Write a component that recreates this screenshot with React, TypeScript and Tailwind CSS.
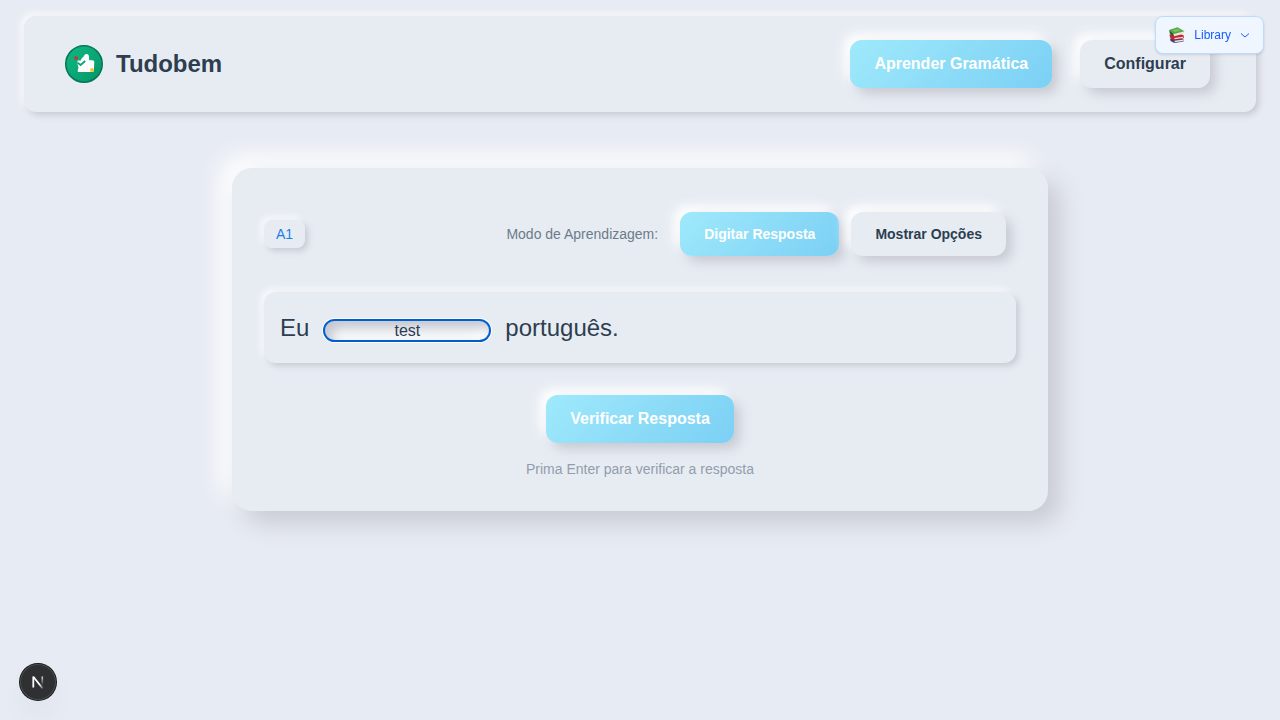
import { useState } from "react";

const raisedSm = "shadow-[3px_3px_6px_#c8cad2,-3px_-3px_6px_#fafbfc]";
const raisedMd = "shadow-[6px_6px_12px_#c8cad2,-6px_-6px_12px_#ffffff]";
const primary = "bg-linear-135 from-[#9fe9fb] to-[#7bd0f4] text-white";
const neutral = "bg-[#e7ecf3] text-[#2d3e50]";

type ButtonProps = {
  label: string;
  active?: boolean;
  small?: boolean;
  onClick?: () => void;
};

function SoftButton({ label, active, small, onClick }: ButtonProps) {
  return (
    <button
      type="button"
      onClick={onClick}
      className={`cursor-pointer rounded-xl px-6 py-3 font-semibold whitespace-nowrap ${raisedMd} ${active ? primary : neutral} ${small ? "text-sm" : "text-base"}`}
    >
      {label}
    </button>
  );
}

function Logo() {
  return (
    <svg width="40" height="40" viewBox="0 0 40 40" aria-hidden="true">
      <defs>
        <linearGradient id="logo-bg" x1="0" y1="0" x2="1" y2="1">
          <stop offset="0" stopColor="#10b981" />
          <stop offset="1" stopColor="#059669" />
        </linearGradient>
      </defs>
      <circle cx="20" cy="20" r="18.2" fill="url(#logo-bg)" stroke="#047857" strokeWidth="1.6" />
      <path
        d="M13.600 16.400L16.800 16.400C17.300 14.700 18.200 13.600 19.400 12.700C20.300 11 21 9.900 22.400 9.900C24.200 9.900 25 11.200 25 12.800L25.200 16.200L28.400 16.200C29.900 16.400 30.500 17.300 30.300 18.700L29.800 26.500C29.700 27.500 29.200 28 28.300 28L15 28C14 28 13.600 27.500 13.700 26.500L14.500 23.400L13.600 20.500Z"
        fill="white"
      />
      <path d="M13.600 18.800L16.600 21L21.200 17" stroke="#0aa874" strokeWidth="1.800" fill="none" />
      <circle cx="12" cy="14" r="2" fill="#dc2626" opacity=".8" />
      <circle cx="28" cy="26" r="2" fill="#fbbf24" opacity=".9" />
    </svg>
  );
}

function Books() {
  return (
    <svg width="18" height="18" viewBox="0 0 18 18" aria-hidden="true">
      <path d="M2 12.500L12 11L15.500 13.500L15.500 15.500L6.500 17L2.500 15Z" fill="#4b3b78" />
      <path d="M6.500 14.700L15.300 13.500L15.300 15L6.700 16.300Z" fill="#e9e3dc" />
      <path d="M1.500 8.500L12 7.500L16 9.700L15.500 12.500L6 14L2 11.500Z" fill="#c9252b" />
      <path d="M6.500 12L15 10.800L15 12L6.600 13.200Z" fill="#f3dfd8" />
      <path d="M1 4L5.600 7.500L5.500 10.500L2 8Z" fill="#25622c" />
      <path d="M5.500 7.500L16 5.500L15.500 8L6 10.300Z" fill="#e6e5dc" />
      <path d="M1 4L9.500 1.300L16.500 5.300L5.700 8Z" fill="#4fa548" />
      <path d="M4 4.200L9.500 2.500L13 4.600L6.600 6.200Z" fill="#75be65" />
    </svg>
  );
}

export default function App() {
  const [mode, setMode] = useState<"type" | "options">("type");
  const [answer, setAnswer] = useState("test");

  return (
    <div className="relative min-h-screen bg-[#e7ebf3] px-6 pt-4 font-['Liberation_Sans',Arial,sans-serif] text-[#2d3e50]">
      <header className={`flex items-center justify-between rounded-xl bg-[#e7ecf3] py-6 pr-[46px] pl-10 ${raisedSm}`}>
        <div className="flex items-center gap-3">
          <Logo />
          <h1 className="text-2xl font-bold">Tudobem</h1>
        </div>
        <nav className="flex gap-7">
          <SoftButton label="Aprender Gramática" active />
          <SoftButton label="Configurar" />
        </nav>
      </header>

      <main className="mx-auto mt-14 max-w-[816px] rounded-[20px] bg-[#e7ecf3] px-8 pt-11 pb-8 shadow-[12px_12px_24px_#c8cad2,-12px_-12px_24px_#ffffff]">
        <div className="flex items-center justify-between">
          <span className={`rounded-lg bg-[#e7ecf3] px-3 py-1 text-sm text-[#1a80e5] ${raisedSm}`}>A1</span>
          <div className="flex items-center gap-3 pr-[10px]">
            <span className="mr-[10px] text-sm text-[#6c7b8a]">Modo de Aprendizagem:</span>
            <SoftButton label="Digitar Resposta" small active={mode === "type"} onClick={() => setMode("type")} />
            <SoftButton label="Mostrar Opções" small active={mode === "options"} onClick={() => setMode("options")} />
          </div>
        </div>

        <form onSubmit={(e) => e.preventDefault()}>
          <div className={`mt-9 flex h-[71px] items-center rounded-xl bg-[#e7ecf3] px-4 text-2xl ${raisedSm}`}>
            <label htmlFor="answer">Eu</label>
            <input
              id="answer"
              value={answer}
              onChange={(e) => setAnswer(e.target.value)}
              className="mx-4 mt-[6px] h-[19px] w-[164px] rounded-[10px] bg-[#eef1f6] text-center text-base shadow-[0_0_0_3px_#ffffff,inset_6px_6px_12px_#c2c5ce,inset_-6px_-6px_12px_#ffffff] outline-2 outline-[#005fcc]"
            />
            <span>português.</span>
          </div>
          <div className="mt-8 flex flex-col items-center gap-4">
            <SoftButton label="Verificar Resposta" active />
            <p className="text-sm text-[#939dab]">Prima Enter para verificar a resposta</p>
          </div>
        </form>
      </main>

      <button
        type="button"
        className="fixed top-4 right-4 flex h-[38px] cursor-pointer items-center gap-2 rounded-lg border border-[#bedbff] bg-[#eff6ff] px-3 text-xs text-[#155dfc] shadow-sm"
      >
        <Books />
        <span>Library</span>
        <svg width="12" height="12" viewBox="0 0 12 12" fill="none" stroke="currentColor" aria-hidden="true">
          <path d="M2 4.500l4 3.500 4-3.500" />
        </svg>
      </button>

      <button
        type="button"
        aria-label="Developer tools"
        className="fixed bottom-5 left-5 flex size-9 items-center justify-center rounded-full bg-[#2e3032] shadow-[0_0_0_1px_#171717,inset_0_0_0_1px_#4b4c4e,0_16px_32px_-8px_rgba(0,0,0,0.12)]"
      >
        <svg width="14" height="14" viewBox="0 0 14 14" fill="none" strokeWidth="1.800" aria-hidden="true">
          <defs>
            <linearGradient id="n-side" x1="0" y1="0" x2="0" y2="1">
              <stop offset="0" stopColor="white" stopOpacity="0.800" />
              <stop offset="1" stopColor="white" stopOpacity="0" />
            </linearGradient>
            <linearGradient id="n-diag" x1="0" y1="0" x2="1" y2="1">
              <stop offset=".65" stopColor="white" />
              <stop offset="1" stopColor="white" stopOpacity="0.200" />
            </linearGradient>
          </defs>
          <path d="M2.300 1.700L11.800 13.500" stroke="url(#n-diag)" />
          <path d="M2.300 12.500V1.500" stroke="white" />
          <rect x="10.500" y="1.500" width="1.600" height="9" fill="url(#n-side)" />
        </svg>
      </button>
    </div>
  );
}
